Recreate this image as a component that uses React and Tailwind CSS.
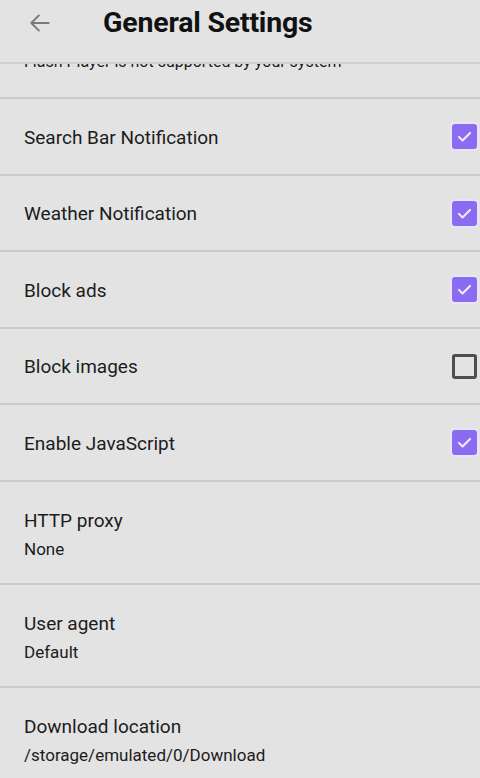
import React from "react";

function Check({ checked }) {
  if (checked) {
    return (
      <div className="w-[25px] h-[25px] rounded-[3px] bg-[#8a6cf0] flex items-center justify-center shadow-[0_0_0_2px_#ebe6f7]">
        <svg width="19" height="19" viewBox="0 0 24 24" fill="none">
          <path d="M5 12.5l4.5 4.5L19 7.5" stroke="#f1ebfd" strokeWidth="2.6" strokeLinecap="round" strokeLinejoin="round" />
        </svg>
      </div>
    );
  }
  return <div className="w-[25px] h-[25px] rounded-[3px] border-[3px] border-[#4e4e4e]" />;
}

function CheckRow({ label, checked, tall }) {
  return (
    <div className={(tall ? "h-[77px]" : "h-[76px]") + " flex items-center justify-between pl-[24px] pr-[3px] border-b-2 border-[#cbcbcb]"}>
      <span className="text-[19px] text-[#1c1c1c] mt-[3px]">{label}</span>
      <Check checked={checked} />
    </div>
  );
}

function TwoRow({ title, sub }) {
  return (
    <div className="h-[103px] flex flex-col justify-center pl-[24px] pt-[3px] border-b-2 border-[#cbcbcb]">
      <span className="text-[19px] leading-[26px] text-[#1c1c1c]">{title}</span>
      <span className="text-[17px] leading-[24px] mt-[3px] text-[#1c1c1c]">{sub}</span>
    </div>
  );
}

export default function App() {
  return (
    <div className="w-[480px] h-[778px] overflow-hidden bg-[#e3e3e3]" style={{ fontFamily: "Roboto, 'Noto Sans', sans-serif" }}>
      <div className="h-[64px] flex items-start border-b-2 border-[#cfcfcf]">
        <div className="flex items-center h-[46px] pl-[27px]">
          <svg width="26" height="26" viewBox="0 0 24 24" fill="none">
            <path d="M20 12H4.5M11 5l-7 7 7 7" stroke="#7a7a7a" strokeWidth="1.8" strokeLinecap="round" strokeLinejoin="round" />
          </svg>
          <span className="ml-[50px] text-[28.5px] font-bold text-[#111] tracking-[-0.2px]">General Settings</span>
        </div>
      </div>
      <div className="h-[35px] overflow-hidden border-b-2 border-[#cbcbcb] pl-[24px]">
        <div className="text-[16px] leading-[20px] -mt-[12px] text-[#1c1c1c]">Flash Player is not supported by your system</div>
      </div>
      <CheckRow label="Search Bar Notification" checked tall />
      <CheckRow label="Weather Notification" checked />
      <CheckRow label="Block ads" checked tall />
      <CheckRow label="Block images" checked={false} />
      <CheckRow label="Enable JavaScript" checked tall />
      <TwoRow title="HTTP proxy" sub="None" />
      <TwoRow title="User agent" sub="Default" />
      <TwoRow title="Download location" sub="/storage/emulated/0/Download" />
    </div>
  );
}
